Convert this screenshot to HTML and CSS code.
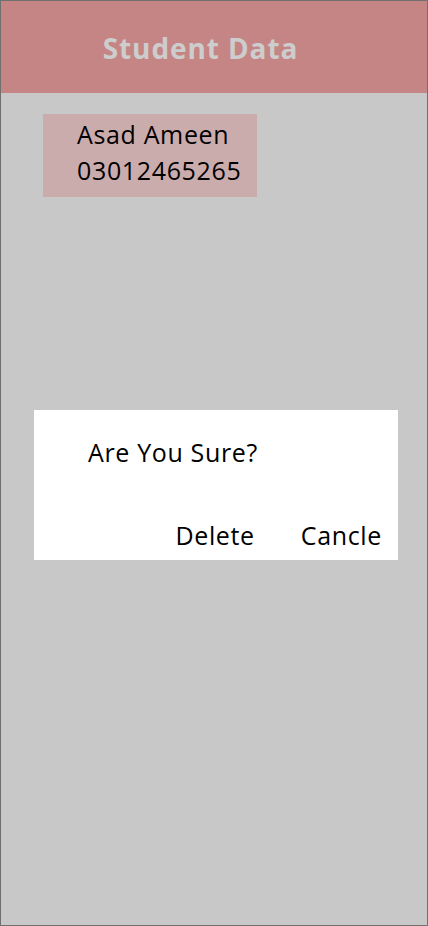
FILE: index.html
```html
<!DOCTYPE html>
<html>
<head>
<meta charset="utf-8">
<link rel="stylesheet" href="styles.css">
</head>
<body>
<div class="frame">
  <header class="header">Student Data</header>
  <main class="list">
    <div class="card">
      <div>Asad Ameen</div>
      <div>03012465265</div>
    </div>
  </main>
  <div class="dialog">
    <div class="dialog-title">Are You Sure?</div>
    <div class="dialog-actions">
      <span class="btn">Delete</span>
      <span class="btn">Cancle</span>
    </div>
  </div>
</div>
</body>
</html>
```
FILE: styles.css
```css
html, body {
  margin: 0;
  padding: 0;
}
body {
  font-family: "Open Sans", "Noto Sans", sans-serif;
  color: #000;
}
.frame {
  position: relative;
  width: 428px;
  height: 926px;
  box-sizing: border-box;
  border: 1px solid #707070;
  background: #c8c8c8;
  display: flex;
  flex-direction: column;
}
.header {
  height: 92px;
  background: #c58585;
  color: #cdcdcd;
  font-weight: 700;
  font-size: 28px;
  letter-spacing: 0.9px;
  display: flex;
  align-items: center;
  justify-content: center;
  padding-right: 27px;
  padding-top: 2px;
  box-sizing: border-box;
}
.list {
  padding: 21px 0 0 42px;
}
.card {
  width: 214px;
  height: 83px;
  box-sizing: border-box;
  background: #cbacad;
  padding: 2px 0 0 34px;
  font-size: 25px;
  line-height: 36px;
  font-weight: 400;
  letter-spacing: 0.65px;
}
.dialog {
  position: absolute;
  left: 33px;
  top: 409px;
  width: 364px;
  height: 150px;
  background: #fff;
  box-sizing: border-box;
  padding: 24px 16px 0 54px;
  font-size: 25px;
  font-weight: 400;
  letter-spacing: 0.65px;
  display: flex;
  flex-direction: column;
}
.dialog-title {
  line-height: 36px;
}
.dialog-actions {
  margin-top: auto;
  margin-bottom: 7px;
  display: flex;
  justify-content: flex-end;
  gap: 46px;
  line-height: 36px;
}
```
